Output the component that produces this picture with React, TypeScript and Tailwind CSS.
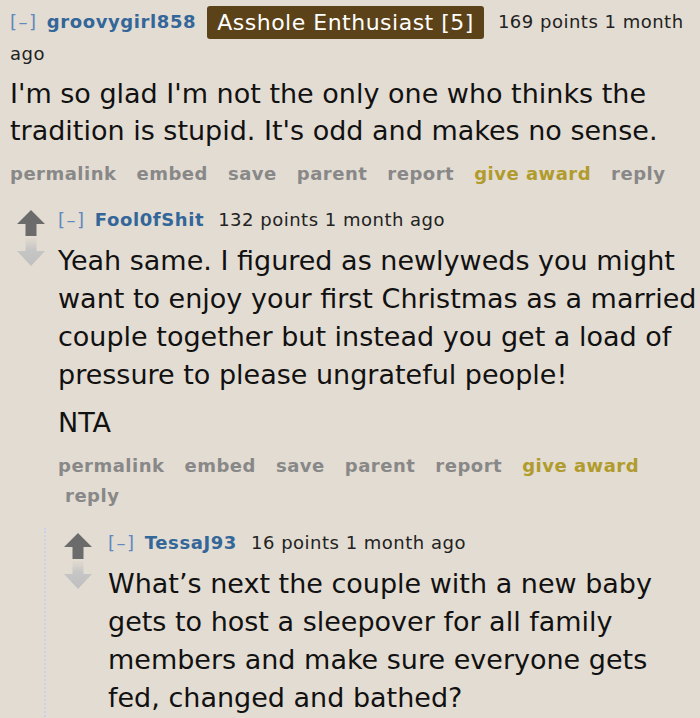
const actions = ["permalink", "embed", "save", "parent", "report", "give award", "reply"];

function Arrows() {
  return (
    <div className="mt-[2px] flex w-[28px] shrink-0 flex-col items-center gap-[2px]">
      <svg width="28" height="26" viewBox="0 0 28 26">
        <path d="M14 0 L28 14 L19.5 14 L19.5 26 L8.5 26 L8.5 14 L0 14 Z" fill="#6b6b6b" />
      </svg>
      <svg width="28" height="28" viewBox="0 0 28 28">
        <defs>
          <linearGradient id="dn" x1="0" y1="0" x2="0" y2="1">
            <stop offset="0" stopColor="#cfcbc5" stopOpacity="0.2" />
            <stop offset="0.4" stopColor="#c6c6c6" />
            <stop offset="1" stopColor="#bfbfbf" />
          </linearGradient>
        </defs>
        <path d="M8.5 0 L19.5 0 L19.5 13 L28 13 L14 28 L0 13 L8.5 13 Z" fill="url(#dn)" />
      </svg>
    </div>
  );
}

function Actions() {
  return (
    <div className="flex flex-wrap text-[18px] font-bold leading-[30px] tracking-[0.5px] text-[#888]">
      {actions.map((a, i) => (
        <span
          key={a}
          className={(i === 0 ? "pr-[13px] " : "pl-[7px] pr-[13px] ") + (a === "give award" ? "text-[#b09b2c]" : "")}
        >
          {a}
        </span>
      ))}
    </div>
  );
}

function Tagline({ user, points }: { user: string; points: string }) {
  return (
    <div className="text-[18px] leading-[24px] tracking-[0.5px] text-[#222]">
      <span className="tracking-[1.5px] text-[#5f89bf]">[–] </span>
      <span className="ml-[2px] font-bold tracking-[0.6px] text-[#336699]">{user}</span>
      <span className="ml-[14px]">{points} 1 month ago</span>
    </div>
  );
}

export default function App() {
  return (
    <div className="min-h-screen w-[700px] overflow-hidden bg-[#e3dcd2] font-['DejaVu_Sans',Verdana,sans-serif] text-[#111]">
      {/* top comment */}
      <div className="pl-[10px] pr-[4px] pt-[6px]">
        <div className="text-[18px] leading-[30px] tracking-[0.5px] text-[#222]">
          <span className="tracking-[1.5px] text-[#5f89bf]">[–] </span>
          <span className="ml-[2px] font-bold tracking-[0.6px] text-[#336699]">groovygirl858</span>
          <span className="ml-[11px] inline-block rounded-[3px] bg-[#5c4219] px-[10px] align-middle text-[22px] leading-[33px] tracking-[0.5px] text-white">
            Asshole Enthusiast [5]
          </span>
          <span className="ml-[14px]">169 points 1 month ago</span>
        </div>
        <p className="mt-[6px] pr-[6px] text-[27px] leading-[37px]">
          I'm so glad I'm not the only one who thinks the tradition is stupid. It's odd and makes no sense.
        </p>
        <div className="mt-[10px]">
          <Actions />
        </div>
      </div>

      {/* child comment */}
      <div className="ml-[17px] mt-[19px] flex">
        <Arrows />
        <div className="ml-[13px] flex-1 pr-[3px]">
          <Tagline user="Fool0fShit" points="132 points" />
          <div className="mt-[10px] space-y-[10px] text-[27px] leading-[38px]">
            <p>
              Yeah same. I figured as newlyweds you might want to enjoy your first Christmas as a married couple
              together but instead you get a load of pressure to please ungrateful people!
            </p>
            <p>NTA</p>
          </div>
          <div className="mt-[9px] pr-[20px]">
            <Actions />
          </div>

          {/* grandchild */}
          <div className="-ml-[14px] mt-[17px] border-l-2 border-dotted border-[#cbd1e6] pl-[18px] pt-[3px]">
            <div className="flex">
              <Arrows />
              <div className="ml-[16px] flex-1">
                <Tagline user="TessaJ93" points="16 points" />
                <p className="mt-[10px] pr-[40px] text-[27px] leading-[38px]">
                  What’s next the couple with a new baby gets to host a sleepover for all family members and make sure
                  everyone gets fed, changed and bathed?
                </p>
              </div>
            </div>
          </div>
        </div>
      </div>
    </div>
  );
}
